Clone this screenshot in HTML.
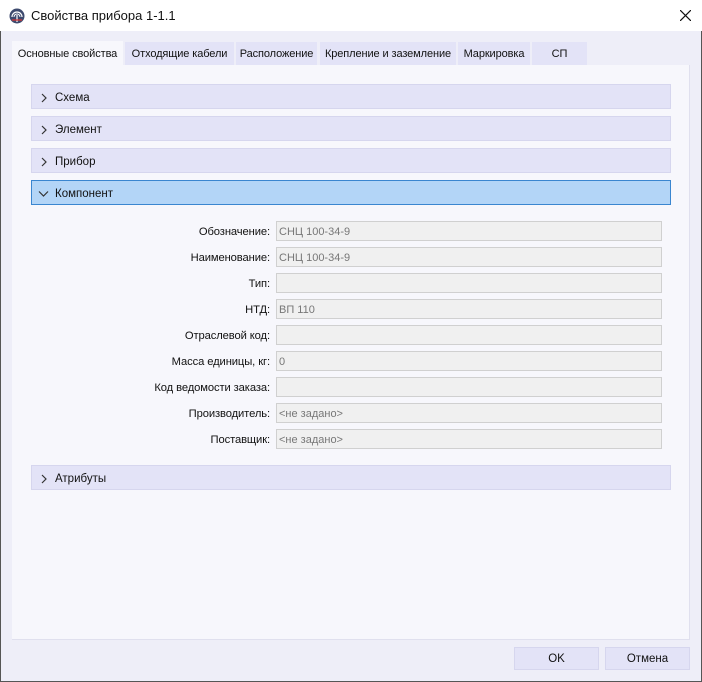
<!DOCTYPE html>
<html><head><meta charset="utf-8"><style>
*{margin:0;padding:0;box-sizing:border-box}
body{width:702px;height:682px;overflow:hidden;background:#eeeef8;font-family:"Liberation Sans","Noto Sans CJK SC",sans-serif;font-size:12px;color:#111;position:relative}
.win{position:absolute;inset:0;border:1px solid #555;}
.title{position:absolute;left:0;top:0;width:702px;height:31px;background:#fff;}
.title .t{position:absolute;left:31px;top:8px;font-size:13px}
.tab{position:absolute;top:42px;height:23px;background:#e3e3f7;line-height:24px;text-align:center;font-size:11px;white-space:nowrap;letter-spacing:-0.1px}
.tab.a{background:#f7f7fc;top:41px;height:25px;line-height:27px}
.panel{position:absolute;left:12px;top:65px;width:678px;height:575px;background:#f7f7fc;border-right:1px solid #e0e0ee;border-bottom:1px solid #e0e0ee}
.sec{position:absolute;left:31px;width:640px;height:25px;background:#e3e3f7;border:1px solid #d6d6ee;line-height:27px;padding-left:23px;font-size:11.5px}
.sec.o{background:#b3d5f7;border-color:#3a86d0}
.sec svg{position:absolute;left:8px;top:8px}
.lab{position:absolute;right:432px;height:20px;line-height:23px;text-align:right;font-size:11.2px;white-space:nowrap;letter-spacing:-0.1px}
.in{position:absolute;left:276px;width:386px;height:20px;background:#f0f0f0;border:1px solid #d0d0d0;color:#777;line-height:21px;padding-left:2px;font-size:11px}
.btn{position:absolute;top:647px;width:85px;height:23px;background:#e3e3f7;border:1px solid #d6d6ee;text-align:center;line-height:23px;font-size:11.5px}
</style></head><body><div class="win"></div>
<div class="title">
<svg style="position:absolute;left:9px;top:8px" width="16" height="16" viewBox="0 0 16 16"><circle cx="8" cy="8" r="7.5" fill="#3d4a6e"/><path d="M3 9a5 5 0 0 1 10 0" stroke="#fff" fill="none" stroke-width="1.2"/><path d="M5 9a3 3 0 0 1 6 0" stroke="#fff" fill="none" stroke-width="1"/><path d="M8 7v7" stroke="#fff" stroke-width="1.2"/><path d="M3 12h10" stroke="#d33" stroke-width="1.2"/></svg>
<span class="t">Свойства прибора 1-1.1</span>
<svg style="position:absolute;left:680px;top:10px" width="11" height="11"><path d="M0 0L11 11M11 0L0 11" stroke="#111" stroke-width="1.2"/></svg>
</div>
<div class="panel"></div>
<div class="tab a" style="left:12px;width:111px">Основные свойства</div>
<div class="tab" style="left:125px;width:109px">Отходящие кабели</div>
<div class="tab" style="left:236px;width:81px">Расположение</div>
<div class="tab" style="left:320px;width:136px">Крепление и заземление</div>
<div class="tab" style="left:458px;width:72px">Маркировка</div>
<div class="tab" style="left:532px;width:55px">СП</div>

<div class="sec" style="top:84px"><svg width="8" height="10"><path d="M2 1l4 4-4 4" stroke="#333" fill="none" stroke-width="1.2"/></svg>Схема</div>
<div class="sec" style="top:116px"><svg width="8" height="10"><path d="M2 1l4 4-4 4" stroke="#333" fill="none" stroke-width="1.2"/></svg>Элемент</div>
<div class="sec" style="top:148px"><svg width="8" height="10"><path d="M2 1l4 4-4 4" stroke="#333" fill="none" stroke-width="1.2"/></svg>Прибор</div>
<div class="sec o" style="top:180px"><svg width="11" height="8" style="top:9px;left:6px"><path d="M1 1.5l4.5 4.5 4.5-4.5" stroke="#333" fill="none" stroke-width="1.2"/></svg>Компонент</div>

<div class="lab" style="top:221px">Обозначение:</div><div class="in" style="top:221px">СНЦ 100-34-9</div>
<div class="lab" style="top:247px">Наименование:</div><div class="in" style="top:247px">СНЦ 100-34-9</div>
<div class="lab" style="top:273px">Тип:</div><div class="in" style="top:273px"></div>
<div class="lab" style="top:299px">НТД:</div><div class="in" style="top:299px">ВП 110</div>
<div class="lab" style="top:325px">Отраслевой код:</div><div class="in" style="top:325px"></div>
<div class="lab" style="top:351px">Масса единицы, кг:</div><div class="in" style="top:351px">0</div>
<div class="lab" style="top:377px">Код ведомости заказа:</div><div class="in" style="top:377px"></div>
<div class="lab" style="top:403px">Производитель:</div><div class="in" style="top:403px">&lt;не задано&gt;</div>
<div class="lab" style="top:429px">Поставщик:</div><div class="in" style="top:429px">&lt;не задано&gt;</div>

<div class="sec" style="top:465px"><svg width="8" height="10"><path d="M2 1l4 4-4 4" stroke="#333" fill="none" stroke-width="1.2"/></svg>Атрибуты</div>

<div class="btn" style="left:514px">OK</div>
<div class="btn" style="left:605px">Отмена</div>
</body></html>
